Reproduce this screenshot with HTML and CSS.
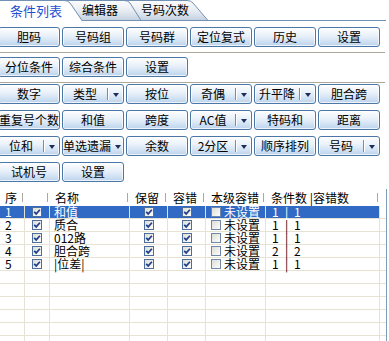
FILE: index.html
```html
<!DOCTYPE html>
<html lang="zh-CN">
<head>
    <meta charset="UTF-8">
    <title>条件列表</title>
    <link rel="stylesheet" href="styles.css">
</head>
<body>
<svg class="defs" width="0" height="0">
    <defs>
        <linearGradient id="cbg" x1="0" y1="0" x2="1" y2="1">
            <stop offset="0" stop-color="#dcdbd3"/>
            <stop offset="1" stop-color="#ffffff"/>
        </linearGradient>
        <symbol id="chk" viewBox="0 0 10 10">
            <rect x="0.5" y="0.5" width="9" height="9" fill="url(#cbg)" stroke="#4d6e9c"/>
            <path d="M2.2 4.8 L4.2 6.9 L7.9 2.7" fill="none" stroke="#20408c" stroke-width="1.7"/>
        </symbol>
        <symbol id="unc" viewBox="0 0 10 10">
            <rect x="0.5" y="0.5" width="9" height="9" fill="url(#cbg)" stroke="#6f87a8"/>
        </symbol>
    </defs>
</svg>

<div class="tabs">
    <svg class="tab-bg" width="389" height="21" viewBox="0 0 389 21">
        <defs>
            <linearGradient id="tg" x1="0" y1="0" x2="0" y2="1">
                <stop offset="0" stop-color="#fdfdfe"/>
                <stop offset="0.5" stop-color="#e8edf3"/>
                <stop offset="1" stop-color="#c3d1e1"/>
            </linearGradient>
        </defs>
        <path d="M120 20.5V0.5H187Q191 0.5 193 3L208 20.5Z" fill="url(#tg)" stroke="#7391b3"/>
        <path d="M60 20.5V0.5H124Q128 0.5 130 3L141 20.5Z" fill="url(#tg)" stroke="#7391b3"/>
        <path d="M-1 21V0.5H64Q68 0.5 70 3L82 21Z" fill="#fff"/>
        <path d="M-1 0.5H64Q68 0.5 70 3L82 20.5" fill="none" stroke="#7391b3"/>
        <path d="M82 20.5H386" fill="none" stroke="#7391b3"/>
    </svg>
    <span class="tab active">条件列表</span>
    <span class="tab t2">编辑器</span>
    <span class="tab t3">号码次数</span>
</div>

<div class="toolbar">
    <div class="btn-row">
        <div class="btn">胆码</div>
        <div class="btn">号码组</div>
        <div class="btn">号码群</div>
        <div class="btn">定位复式</div>
        <div class="btn">历史</div>
        <div class="btn">设置</div>
    </div>
    <div class="sep first"></div>
    <div class="btn-row">
        <div class="btn">分位条件</div>
        <div class="btn">综合条件</div>
        <div class="btn">设置</div>
    </div>
    <div class="sep second"></div>
    <div class="btn-grid">
        <div class="btn-row">
            <div class="btn">数字</div>
            <div class="btn dd"><span class="lbl">类型</span><span class="arr"></span></div>
            <div class="btn">按位</div>
            <div class="btn dd"><span class="lbl">奇偶</span><span class="arr"></span></div>
            <div class="btn dd"><span class="lbl">升平降</span><span class="arr"></span></div>
            <div class="btn">胆合跨</div>
        </div>
        <div class="btn-row">
            <div class="btn">重复号个数</div>
            <div class="btn">和值</div>
            <div class="btn">跨度</div>
            <div class="btn dd"><span class="lbl">AC值</span><span class="arr"></span></div>
            <div class="btn">特码和</div>
            <div class="btn">距离</div>
        </div>
        <div class="btn-row">
            <div class="btn dd"><span class="lbl">位和</span><span class="arr"></span></div>
            <div class="btn dd"><span class="lbl">单选遗漏</span><span class="arr nosep"></span></div>
            <div class="btn">余数</div>
            <div class="btn dd"><span class="lbl">2分区</span><span class="arr"></span></div>
            <div class="btn">顺序排列</div>
            <div class="btn dd"><span class="lbl">号码</span><span class="arr"></span></div>
        </div>
        <div class="btn-row">
            <div class="btn">试机号</div>
            <div class="btn">设置</div>
        </div>
    </div>
</div>

<div class="list">
    <div class="lv lv-head">
        <div class="hcell">序</div>
        <div class="hcell"></div>
        <div class="hcell">名称</div>
        <div class="hcell">保留</div>
        <div class="hcell">容错</div>
        <div class="hcell">本级容错</div>
        <div class="hcell">条件数 |容错数</div>
        <div class="hcell fill"></div>
    </div>

    <div class="lv lv-row sel">
        <div class="cell num">1</div>
        <div class="cell chk"><svg class="cb"><use href="#chk"/></svg></div>
        <div class="cell name">和值</div>
        <div class="cell chk"><svg class="cb"><use href="#chk"/></svg></div>
        <div class="cell chk"><svg class="cb"><use href="#chk"/></svg></div>
        <div class="cell lvl"><svg class="cb"><use href="#unc"/></svg><span>未设置</span></div>
        <div class="cell cnt"><span class="c1">1</span><span class="bar">|</span><span>1</span></div>
        <div class="cell fill"></div>
    </div>
    <div class="lv lv-row">
        <div class="cell num">2</div>
        <div class="cell chk"><svg class="cb"><use href="#chk"/></svg></div>
        <div class="cell name">质合</div>
        <div class="cell chk"><svg class="cb"><use href="#chk"/></svg></div>
        <div class="cell chk"><svg class="cb"><use href="#chk"/></svg></div>
        <div class="cell lvl"><svg class="cb"><use href="#unc"/></svg><span>未设置</span></div>
        <div class="cell cnt"><span class="c1">1</span><span class="bar">|</span><span>1</span></div>
        <div class="cell fill"></div>
    </div>
    <div class="lv lv-row">
        <div class="cell num">3</div>
        <div class="cell chk"><svg class="cb"><use href="#chk"/></svg></div>
        <div class="cell name">012路</div>
        <div class="cell chk"><svg class="cb"><use href="#chk"/></svg></div>
        <div class="cell chk"><svg class="cb"><use href="#chk"/></svg></div>
        <div class="cell lvl"><svg class="cb"><use href="#unc"/></svg><span>未设置</span></div>
        <div class="cell cnt"><span class="c1">1</span><span class="bar">|</span><span>1</span></div>
        <div class="cell fill"></div>
    </div>
    <div class="lv lv-row">
        <div class="cell num">4</div>
        <div class="cell chk"><svg class="cb"><use href="#chk"/></svg></div>
        <div class="cell name">胆合跨</div>
        <div class="cell chk"><svg class="cb"><use href="#chk"/></svg></div>
        <div class="cell chk"><svg class="cb"><use href="#chk"/></svg></div>
        <div class="cell lvl"><svg class="cb"><use href="#unc"/></svg><span>未设置</span></div>
        <div class="cell cnt"><span class="c1">2</span><span class="bar">|</span><span>2</span></div>
        <div class="cell fill"></div>
    </div>
    <div class="lv lv-row">
        <div class="cell num">5</div>
        <div class="cell chk"><svg class="cb"><use href="#chk"/></svg></div>
        <div class="cell name">|位差|</div>
        <div class="cell chk"><svg class="cb"><use href="#chk"/></svg></div>
        <div class="cell chk"><svg class="cb"><use href="#chk"/></svg></div>
        <div class="cell lvl"><svg class="cb"><use href="#unc"/></svg><span>未设置</span></div>
        <div class="cell cnt"><span class="c1">1</span><span class="bar">|</span><span>1</span></div>
        <div class="cell fill"></div>
    </div>

    <div class="lv lv-row"><div class="cell"></div><div class="cell"></div><div class="cell"></div><div class="cell"></div><div class="cell"></div><div class="cell"></div><div class="cell"></div><div class="cell fill"></div></div>
    <div class="lv lv-row"><div class="cell"></div><div class="cell"></div><div class="cell"></div><div class="cell"></div><div class="cell"></div><div class="cell"></div><div class="cell"></div><div class="cell fill"></div></div>
    <div class="lv lv-row"><div class="cell"></div><div class="cell"></div><div class="cell"></div><div class="cell"></div><div class="cell"></div><div class="cell"></div><div class="cell"></div><div class="cell fill"></div></div>
    <div class="lv lv-row"><div class="cell"></div><div class="cell"></div><div class="cell"></div><div class="cell"></div><div class="cell"></div><div class="cell"></div><div class="cell"></div><div class="cell fill"></div></div>
    <div class="lv lv-row"><div class="cell"></div><div class="cell"></div><div class="cell"></div><div class="cell"></div><div class="cell"></div><div class="cell"></div><div class="cell"></div><div class="cell fill"></div></div>
    <div class="lv lv-row"><div class="cell"></div><div class="cell"></div><div class="cell"></div><div class="cell"></div><div class="cell"></div><div class="cell"></div><div class="cell"></div><div class="cell fill"></div></div>
</div>
</body>
</html>
```

FILE: styles.css
```css
body {
    margin: 0;
    width: 389px;
    height: 341px;
    overflow: hidden;
    background: #fff;
    color: #000;
    font-family: "Noto Sans CJK SC", "Noto Sans", sans-serif;
    font-size: 12px;
    line-height: 1;
}
.defs {
    position: absolute;
    width: 0;
    height: 0;
}

/* tabs */
.tabs {
    position: relative;
    display: flex;
    height: 21px;
}
.tab-bg {
    position: absolute;
    left: 0;
    top: 0;
}
.tab {
    position: relative;
    display: flex;
    align-items: center;
    justify-content: center;
    height: 20px;
    white-space: nowrap;
}
.tab.active {
    width: 72px;
    color: #1d4fd1;
    font-size: 13px;
}
.tab.t2 {
    width: 56px;
}
.tab.t3 {
    width: 74px;
}

/* buttons */
.toolbar {
    padding-top: 6px;
}
.btn-row {
    display: flex;
    gap: 2px;
    margin-left: -2px;
}
.btn {
    box-sizing: border-box;
    width: 62px;
    height: 20px;
    border: 1px solid #4a77a6;
    border-radius: 3px;
    background: linear-gradient(#fdfeff, #e8f0f9 45%, #d0e1f3 75%, #bcd3eb);
    box-shadow: inset 0 0 0 1px rgba(255, 255, 255, 0.7);
    display: flex;
    align-items: center;
    justify-content: center;
    white-space: nowrap;
}
.btn.dd {
    justify-content: flex-start;
}
.btn.dd .lbl {
    flex: 1;
    display: flex;
    justify-content: center;
}
.arr {
    box-sizing: border-box;
    width: 16px;
    height: 12px;
    border-left: 1px solid #6b8db3;
    box-shadow: inset 1px 0 #fff;
    display: flex;
    align-items: center;
    justify-content: center;
    padding-top: 2px;
}
.arr.nosep {
    border-left-color: transparent;
    box-shadow: none;
}
.arr::after {
    content: "";
    border-left: 3px solid transparent;
    border-right: 3px solid transparent;
    border-top: 4px solid #1b2f5a;
}
.sep {
    width: 385px;
    border-top: 1px solid #aca899;
}
.sep.first {
    margin: 5px 0 4px;
}
.sep.second {
    margin: 5px 0 1px;
}
.btn-grid {
    display: flex;
    flex-direction: column;
    gap: 6px;
}

/* list view */
.list {
    box-sizing: border-box;
    width: 387px;
    margin-top: 7px;
    border-right: 1px solid #7f9db9;
}
.lv {
    display: grid;
    grid-template-columns: 25px 25px 80px 38px 38px 60px 114px 1fr;
}
.hcell {
    height: 17px;
    display: flex;
    align-items: center;
    padding-left: 5px;
    white-space: nowrap;
    background: linear-gradient(#a9a8a2, #a9a8a2) no-repeat right 2px center / 1px 9px;
}
.hcell.fill {
    background: none;
}
.cell {
    box-sizing: border-box;
    height: 13px;
    border-right: 1px solid #e6e3d5;
    border-bottom: 1px solid #e6e3d5;
    display: flex;
    align-items: center;
    white-space: nowrap;
}
.cell.fill {
    border-right: none;
}
.sel .cell:not(.fill) {
    background: #316ac5;
    color: #fff;
}
.num {
    padding-left: 5px;
}
.chk {
    justify-content: center;
}
.name {
    padding-left: 4px;
}
.lvl {
    padding-left: 5px;
    gap: 3px;
}
.cnt {
    padding-left: 6px;
}
.c1 {
    width: 13px;
}
.bar {
    width: 9px;
}
.cb {
    display: block;
    width: 10px;
    height: 10px;
}
```
